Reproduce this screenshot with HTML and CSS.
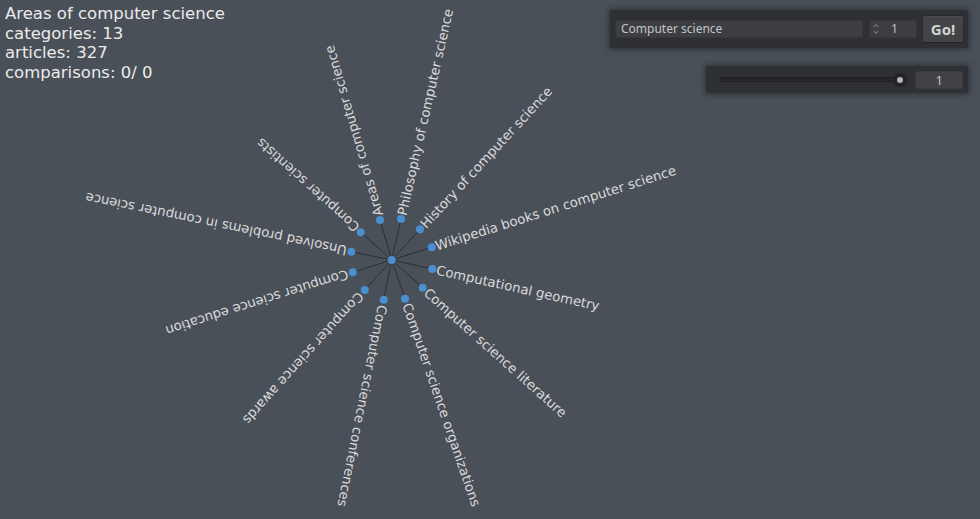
FILE: index.html
```html
<!DOCTYPE html>
<html>
<head>
<meta charset="utf-8">
<link rel="stylesheet" href="styles.css">
</head>
<body>
<div class="stage">
  <svg class="graph" width="980" height="519" viewBox="0 0 980 519">
    <g transform="translate(391.7 260)">
      <g class="edges">
        <line x1="0" y1="0" x2="-11.7" y2="-40"/>
        <line x1="0" y1="0" x2="9.3" y2="-41"/>
        <line x1="0" y1="0" x2="28.3" y2="-30.7"/>
        <line x1="0" y1="0" x2="40" y2="-12.7"/>
        <line x1="0" y1="0" x2="40.6" y2="9"/>
        <line x1="0" y1="0" x2="31" y2="27.7"/>
        <line x1="0" y1="0" x2="13.3" y2="38.7"/>
        <line x1="0" y1="0" x2="-8" y2="39.7"/>
        <line x1="0" y1="0" x2="-27" y2="30"/>
        <line x1="0" y1="0" x2="-39" y2="12.3"/>
        <line x1="0" y1="0" x2="-40.4" y2="-8.3"/>
        <line x1="0" y1="0" x2="-31" y2="-27.7"/>
      </g>
      <g class="nodes">
        <circle cx="0" cy="0" r="4"/>
        <circle cx="-11.7" cy="-40" r="4"/>
        <circle cx="9.3" cy="-41" r="4"/>
        <circle cx="28.3" cy="-30.7" r="4"/>
        <circle cx="40" cy="-12.7" r="4"/>
        <circle cx="40.6" cy="9" r="4"/>
        <circle cx="31" cy="27.7" r="4"/>
        <circle cx="13.3" cy="38.7" r="4"/>
        <circle cx="-8" cy="39.7" r="4"/>
        <circle cx="-27" cy="30" r="4"/>
        <circle cx="-39" cy="12.3" r="4"/>
        <circle cx="-40.4" cy="-8.3" r="4"/>
        <circle cx="-31" cy="-27.7" r="4"/>
      </g>
      <g class="labels">
        <text transform="rotate(-106.3)" x="46" dy="0.35em">Areas of computer science</text>
        <text transform="rotate(-77.2)" x="46" dy="0.35em">Philosophy of computer science</text>
        <text transform="rotate(-47.3)" x="46" dy="0.35em">History of computer science</text>
        <text transform="rotate(-17.6)" x="46" dy="0.35em">Wikipedia books on computer science</text>
        <text transform="rotate(12.5)" x="46" dy="0.35em">Computational geometry</text>
        <text transform="rotate(41.8)" x="46" dy="0.35em">Computer science literature</text>
        <text transform="rotate(71)" x="46" dy="0.35em">Computer science organizations</text>
        <text transform="rotate(101.4)" x="46" dy="0.35em">Computer science conferences</text>
        <text transform="rotate(132)" x="46" dy="0.35em">Computer science awards</text>
        <text transform="rotate(162.5)" x="46" dy="0.35em">Computer science education</text>
        <text transform="rotate(191.6)" x="46" dy="0.35em">Unsolved problems in computer science</text>
        <text transform="rotate(221.8)" x="46" dy="0.35em">Computer scientists</text>
      </g>
    </g>
  </svg>

  <div class="hud">
    <div class="info">
      <div>Areas of computer science</div>
      <div>categories: 13</div>
      <div>articles: 327</div>
      <div>comparisons: 0/ 0</div>
    </div>
    <div class="controls">
      <div class="panel search">
        <div class="field text-field">Computer science</div>
        <div class="field spin">
          <svg class="spin-icon" width="6" height="12" viewBox="0 0 6 12">
            <path d="M0.8 4 L3 1.5 L5.2 4 M0.8 8 L3 10.5 L5.2 8" fill="none" stroke="#8a8c90" stroke-width="1"/>
          </svg>
          <span class="spin-val">1</span>
        </div>
        <button class="go">Go!</button>
      </div>
      <div class="panel depth">
        <div class="slider">
          <div class="track"></div>
          <div class="grabber"></div>
        </div>
        <div class="field value">1</div>
      </div>
    </div>
  </div>
</div>
</body>
</html>
```
FILE: styles.css
```css
html, body {
  margin: 0;
  padding: 0;
  background: #4a5058;
}

.stage {
  position: relative;
  width: 980px;
  height: 519px;
  overflow: hidden;
  background: #4a5058;
}

.graph {
  position: absolute;
  left: 0;
  top: 0;
}

.edges line {
  stroke: #2b2f35;
  stroke-width: 1;
}

.nodes circle {
  fill: #4a8fd0;
}

.labels text {
  font-family: "DejaVu Sans", sans-serif;
  font-size: 13.3px;
  fill: #d8d9db;
}

.hud {
  position: relative;
  display: flex;
  justify-content: space-between;
  align-items: flex-start;
  padding: 0 12px 0 5px;
}

.info {
  font-family: "DejaVu Sans", sans-serif;
  font-size: 16.5px;
  line-height: 19.5px;
  color: #ebebeb;
  padding-top: 4px;
}

.controls {
  display: flex;
  flex-direction: column;
  align-items: flex-end;
  gap: 18px;
  padding-top: 10px;
}

.panel {
  background: #2e3033;
  box-shadow: 0 0 5px 2px rgba(30, 32, 36, 0.5);
  border-radius: 2px;
  display: flex;
  align-items: center;
  box-sizing: border-box;
}

.search {
  width: 358px;
  height: 38px;
  padding: 0 4px 0 5px;
}

.field {
  box-sizing: border-box;
  background: #3c3e42;
  border: 1px solid #35373a;
  border-radius: 2px;
  font-family: "Noto Sans", sans-serif;
  font-size: 12px;
  color: #c3c4c6;
}

.text-field {
  width: 248px;
  height: 18px;
  line-height: 16px;
  padding-left: 5px;
}

.spin {
  margin-left: 6px;
  width: 48px;
  height: 18px;
  display: flex;
  align-items: center;
  padding-left: 3px;
}

.spin-icon {
  display: block;
}

.spin-val {
  margin-left: 12px;
  line-height: 16px;
}

.go {
  margin-left: 5px;
  width: 42px;
  height: 28px;
  box-sizing: border-box;
  background: #424448;
  border: 1px solid #27292c;
  border-bottom-color: #222326;
  border-radius: 2px;
  box-shadow: inset 0 1px 0 #4a4c50;
  font-family: "Noto Sans", sans-serif;
  font-weight: bold;
  font-size: 15px;
  color: #d3d3d3;
  padding: 0;
}

.depth {
  width: 262px;
  height: 27px;
  padding: 0 5px 0 13px;
}

.slider {
  position: relative;
  width: 189px;
  height: 14px;
  display: flex;
  align-items: center;
}

.track {
  width: 100%;
  height: 5px;
  box-sizing: border-box;
  background: #26272a;
  border: 1px solid #1f2022;
  border-radius: 3px;
}

.grabber {
  position: absolute;
  right: 0;
  top: 0;
  width: 14px;
  height: 14px;
  box-sizing: border-box;
  border-radius: 50%;
  background: #b4b5b7;
  border: 4px solid #232427;
}

.value {
  margin-left: 8px;
  width: 48px;
  height: 18px;
  line-height: 16px;
  text-align: center;
  background: #414347;
  border-color: #393b3e;
  font-size: 13px;
}
```
